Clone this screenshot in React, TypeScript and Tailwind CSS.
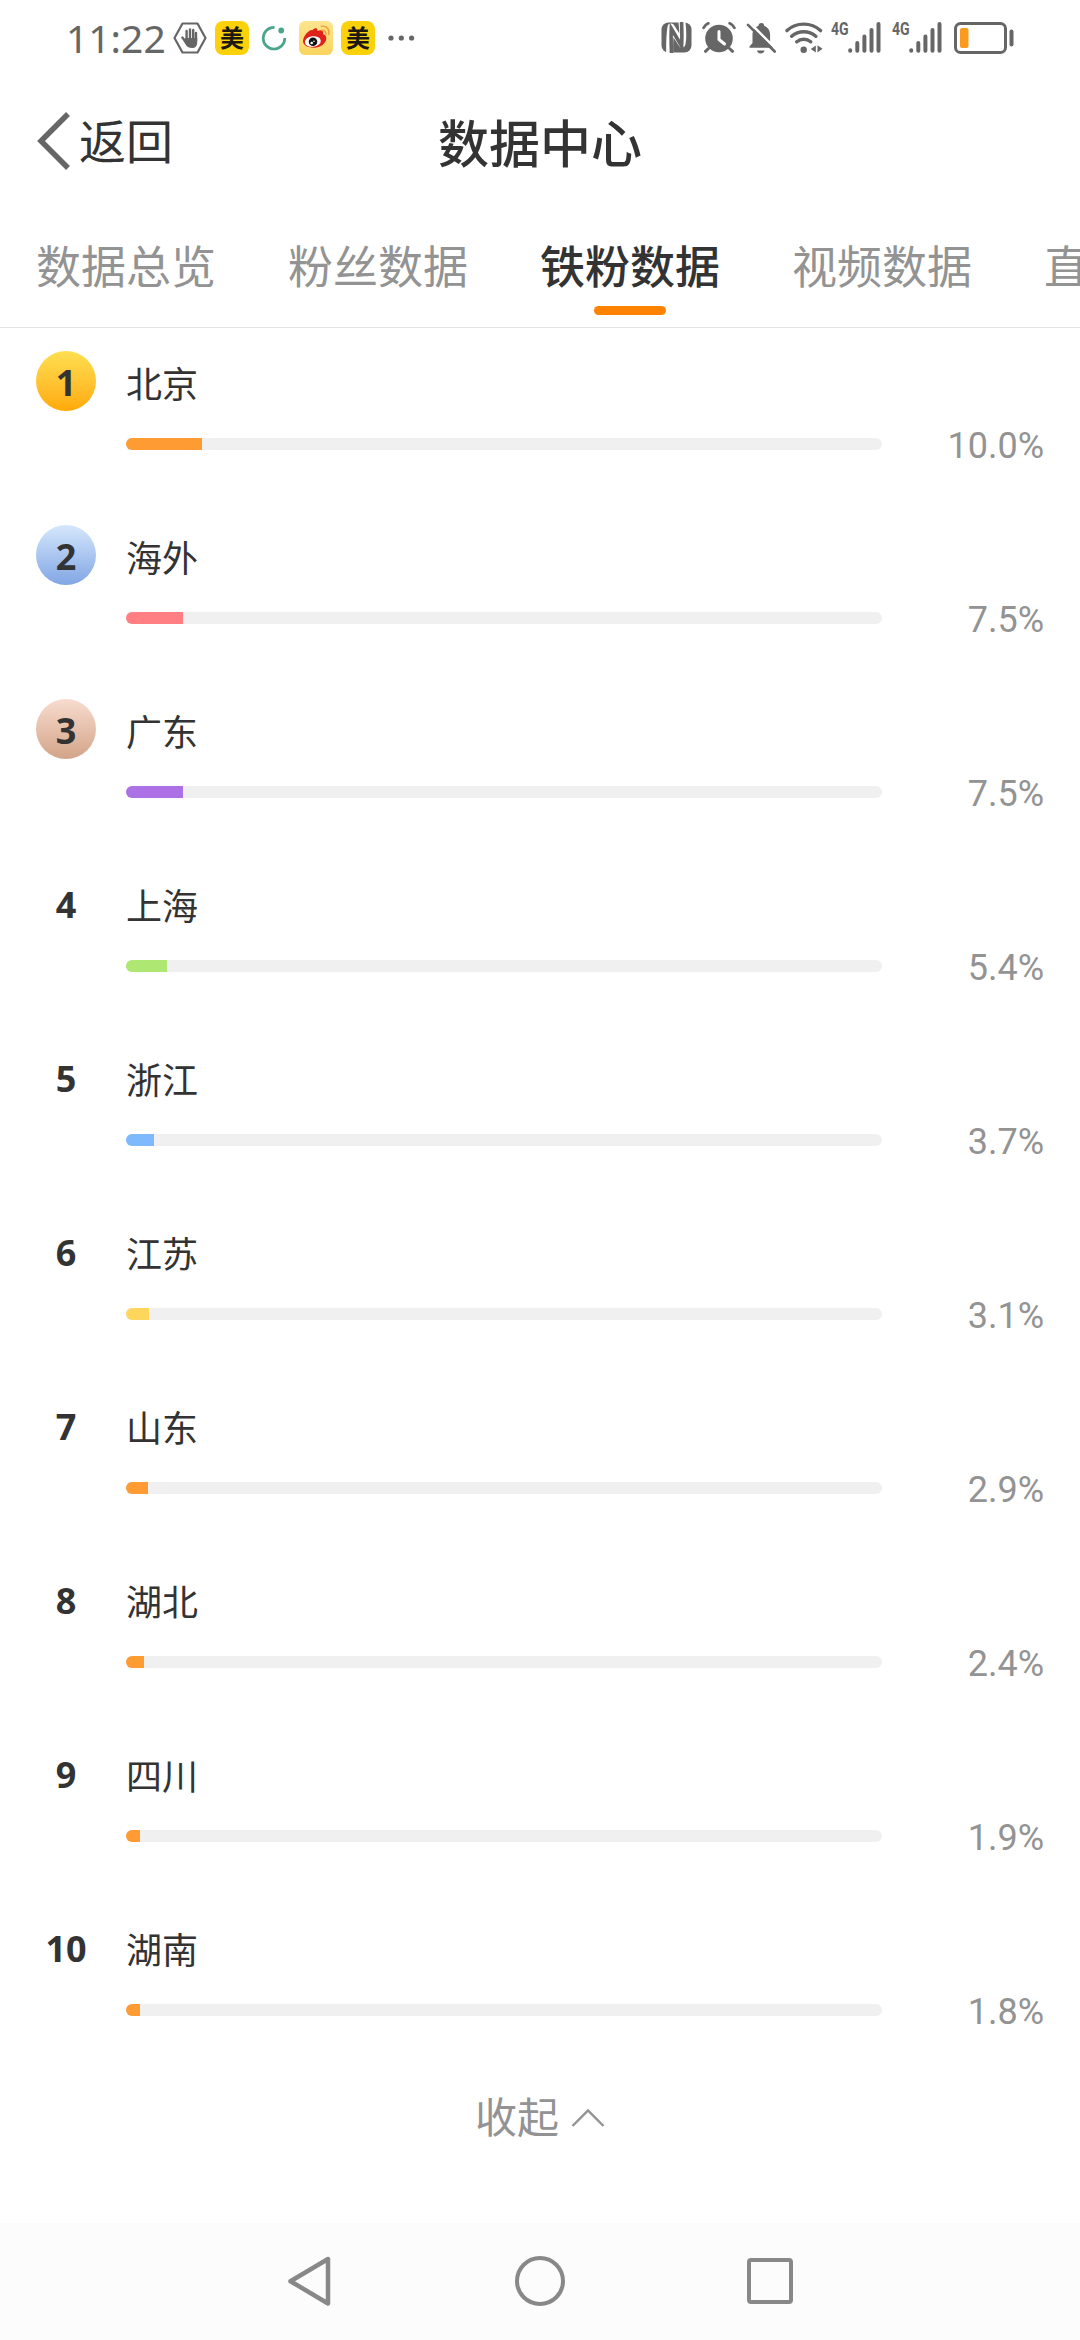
import clsx from 'clsx'

const TABS = ['数据总览', '粉丝数据', '铁粉数据', '视频数据', '直']
const ACTIVE_TAB = '铁粉数据'

const REGIONS = [
  { name: '北京', percent: 10.0, bar: 'bg-[#ff9b33]', badge: 'bg-linear-to-b from-[#ffdf4f] to-[#ffaa00]' },
  { name: '海外', percent: 7.5, bar: 'bg-[#ff7f82]', badge: 'bg-linear-to-b from-[#d6e7fc] to-[#81a6e4]' },
  { name: '广东', percent: 7.5, bar: 'bg-[#ac71e4]', badge: 'bg-linear-to-b from-[#f8dccf] to-[#d3a488]' },
  { name: '上海', percent: 5.4, bar: 'bg-[#aee872]' },
  { name: '浙江', percent: 3.7, bar: 'bg-[#7fb9fd]' },
  { name: '江苏', percent: 3.1, bar: 'bg-[#ffd65c]' },
  { name: '山东', percent: 2.9, bar: 'bg-[#ff9b33]' },
  { name: '湖北', percent: 2.4, bar: 'bg-[#ff9b33]' },
  { name: '四川', percent: 1.9, bar: 'bg-[#ff9b33]' },
  { name: '湖南', percent: 1.8, bar: 'bg-[#ff9b33]' },
]

function MeituanIcon() {
  return (
    <span className="flex size-[34px] items-center justify-center rounded-[8px] bg-[#fad10a] pb-[2px] text-[24px] leading-none font-bold text-[#1c1a10]">
      美
    </span>
  )
}

function HandIcon() {
  return (
    <svg width="34" height="32" viewBox="0 0 34 32" fill="none">
      <path d="M9.5 1.5h15l8 14.5-8 14.5h-15L1.5 16z" stroke="#666" strokeWidth="2.2" strokeLinejoin="round" />
      <path
        d="M13.6 9v9M17 7.4v10M20.2 8v10M23 11v8M9.3 15.6l4 5"
        stroke="#666"
        strokeWidth="2.4"
        strokeLinecap="round"
      />
      <path d="M12.4 16h11.8v4.500c0 3.500-1.800 5.500-5.200 5.500-3 0-4.700-1-5.900-2.800L10.500 19z" fill="#666" />
    </svg>
  )
}

function RingIcon() {
  return (
    <svg width="26" height="26" viewBox="0 0 26 26" fill="none">
      <path d="M13.500 2.400A10.800 10.800 0 1 0 23.800 13" stroke="#4aa58c" strokeWidth="2.700" />
      <circle cx="20.200" cy="5.500" r="2.900" fill="#4aa58c" />
    </svg>
  )
}

function WeiboIcon() {
  return (
    <svg width="34" height="34" viewBox="0 0 34 34" fill="none">
      <defs>
        <linearGradient id="weibo-bg" x1="0" y1="0" x2="0" y2="1">
          <stop offset="0" stopColor="#fde590" />
          <stop offset="1" stopColor="#f9d45f" />
        </linearGradient>
      </defs>
      <rect width="34" height="34" rx="6" fill="url(#weibo-bg)" />
      <path
        d="M13.500 9.200c1.600-1.800 3.300-2.400 4.400-1.500.6.500.7 1.300.4 2.400 2.400-1 5-1.100 5.700.3.400.8.300 1.700-.1 2.700 2.300.8 3.600 2.300 3.400 4.700-.4 4.600-5.600 9-12.200 9C8.800 26.800 4 24.300 4 20.100c0-3.100 2.200-7 5.200-9.400 1.200-1 3-2.300 4.300-1.500z"
        fill="#e0201b"
      />
      <ellipse cx="13.800" cy="20.500" rx="8" ry="5.300" transform="rotate(-7 13.800 20.500)" fill="#fff" />
      <circle cx="14" cy="20.800" r="4.300" fill="#111" />
      <circle cx="12.700" cy="22" r="1.300" fill="#fff" />
      <circle cx="15" cy="20.300" r=".8" fill="#fff" />
      <path d="M23 9.400c2.600-.4 4.300 1.500 3.800 4" stroke="#f0a53c" strokeWidth="1.600" strokeLinecap="round" />
      <path d="M22.500 5.400c5-1 8.600 3.200 7.300 8" stroke="#f0a53c" strokeWidth="1.600" strokeLinecap="round" />
    </svg>
  )
}

function MoreIcon() {
  return (
    <svg width="28" height="8" viewBox="0 0 28 8" fill="#666">
      <circle cx="4" cy="4" r="2.600" />
      <circle cx="14.300" cy="4" r="2.600" />
      <circle cx="24.600" cy="4" r="2.600" />
    </svg>
  )
}

function NfcIcon() {
  return (
    <svg width="31" height="31" viewBox="0 0 31 31" fill="none">
      <rect x=".5" y=".5" width="30" height="30" rx="7" fill="#666" />
      <path d="M8.800 34Q8.200 16 10 5L21 22Q22.800 14 20.600-3" stroke="#fff" strokeWidth="7" strokeLinejoin="round" />
      <path d="M10.600 34Q9.800 16 10.300 6.500L20.600 24Q21.200 14 20.400-3" stroke="#666" strokeWidth="3.600" />
    </svg>
  )
}

function AlarmIcon() {
  return (
    <svg width="34" height="31" viewBox="0 0 34 31" fill="none">
      <circle cx="17" cy="16.500" r="13.800" fill="#666" />
      <path d="M1.600 5.800C2.700 3.800 4.200 2.300 6.300 1.300M32.400 5.800c-1.100-2-2.600-3.500-4.700-4.500" stroke="#666" strokeWidth="2.800" strokeLinecap="round" />
      <path d="M6.500 26.500l-3 2.800M27.500 26.500l3 2.800" stroke="#666" strokeWidth="3" strokeLinecap="round" />
      <path d="M17 9.500v8l5.500 4.500" stroke="#fff" strokeWidth="3" strokeLinecap="round" strokeLinejoin="round" />
    </svg>
  )
}

function MutedBellIcon() {
  return (
    <svg width="31" height="32" viewBox="0 0 31 32" fill="none">
      <path d="M3.500 25.800v-1.300l3-3.500v-8c0-4.300 2.200-7.700 5.800-9C12.600 2 13.600 1 15.300 1s2.700 1 3 3c3.600 1.300 5.800 4.700 5.800 9v8l3.200 3.500v1.300z" fill="#666" />
      <path d="M11 28.500h7.500c-.4 1.800-1.600 3-3.700 3s-3.400-1.200-3.800-3z" fill="#666" />
      <path d="M3.500 .5l29 29" stroke="#fff" strokeWidth="2.600" />
      <path d="M2 2.800l26.700 26.700" stroke="#666" strokeWidth="2.600" strokeLinecap="round" />
    </svg>
  )
}

function WifiIcon() {
  return (
    <svg width="38" height="32" viewBox="0 0 38 32" fill="none">
      <path
        d="M2 8.600c9.200-8.600 24.300-8.600 33.500 0M6.700 14.300c6.800-6 17.300-6 24.100 0M11.800 19.800c3.900-3.400 10-3.400 13.900 0"
        stroke="#666"
        strokeWidth="3.400"
        strokeLinecap="round"
      />
      <circle cx="18.700" cy="27.700" r="3.200" fill="#666" />
      <path d="M25.800 27l5-3.400v7zM37.500 26.800l-5-3.600v7.200z" fill="#666" />
    </svg>
  )
}

function SignalIcon() {
  return (
    <div className="flex h-[31px] w-[50px]">
      <span className="w-[17px] origin-left scale-x-[0.74] font-[Roboto] text-[19px] leading-[14px] font-bold">4G</span>
      <svg width="33" height="31" viewBox="0 0 33 31" stroke="#666" strokeWidth="4" strokeLinecap="round">
        <path d="M2.200 28.200v.5M9.300 21v7.700M16.400 14.500v14.200M23.500 8v20.700M30.500 2v26.700" />
      </svg>
    </div>
  )
}

function BatteryIcon() {
  return (
    <svg width="60" height="32" viewBox="0 0 60 32" fill="none">
      <rect x="1.500" y="1.500" width="50" height="29" rx="5" stroke="#666" strokeWidth="3" />
      <rect x="6" y="6" width="8.500" height="20" rx="2" fill="#fa9a1e" />
      <rect x="55.500" y="7.500" width="4" height="17" rx="2" fill="#666" />
    </svg>
  )
}

function StatusBar() {
  return (
    <div className="flex h-[76px] items-center justify-between pr-[66px] pl-[66px] text-[#666]">
      <div className="flex items-center">
        <span className="mb-[2px] w-[99px] font-['Noto_Sans'] text-[39px] leading-none whitespace-nowrap">11:22</span>
        <div className="ml-[8px] flex items-center gap-[8px]">
          <HandIcon />
          <MeituanIcon />
          <div className="flex w-[34px] justify-center">
            <RingIcon />
          </div>
          <WeiboIcon />
          <MeituanIcon />
        </div>
        <div className="ml-[12px]">
          <MoreIcon />
        </div>
      </div>
      <div className="mb-[1px] flex items-center">
        <NfcIcon />
        <div className="ml-[10px]"><AlarmIcon /></div>
        <div className="ml-[10px]"><MutedBellIcon /></div>
        <div className="ml-[8px]"><WifiIcon /></div>
        <div className="ml-[8px]"><SignalIcon /></div>
        <div className="ml-[11px]"><SignalIcon /></div>
        <div className="ml-[12px]"><BatteryIcon /></div>
      </div>
    </div>
  )
}

function Header() {
  return (
    <header className="grid h-[132px] grid-cols-3 items-center px-[36px] text-[#333]">
      <button className="mb-[2px] flex items-center">
        <svg width="36" height="58" viewBox="0 0 36 58" fill="none">
          <path d="M32 2L5 29l27 27" stroke="#666" strokeWidth="5.500" />
        </svg>
        <span className="mb-[5px] ml-[7px] text-[47px] leading-[58px]">返回</span>
      </button>
      <h1 className="mb-[2px] text-center text-[51px] leading-[58px] font-medium">数据中心</h1>
    </header>
  )
}

function TabBar() {
  return (
    <nav className="flex h-[120px] gap-[72px] overflow-hidden border-b border-[#e3e3e3] pl-[36px]">
      {TABS.map((tab) => (
        <div key={tab} className="flex w-[180px] shrink-0 flex-col items-start pt-[32px]">
          <span
            className={clsx(
              'text-[45px] leading-[50px] whitespace-nowrap',
              tab === ACTIVE_TAB ? 'font-medium text-[#333]' : 'text-[#939393]'
            )}
          >
            {tab}
          </span>
          {tab === ACTIVE_TAB && <span className="mt-[16px] h-[9px] w-[72px] self-center rounded-full bg-[#ff8200]" />}
        </div>
      ))}
    </nav>
  )
}

function RegionRow({ rank, region }: { rank: number; region: (typeof REGIONS)[number] }) {
  return (
    <li className="flex h-[174px] px-[36px]">
      <div
        className={clsx(
          "flex size-[60px] items-center justify-center rounded-full pt-[3px] font-['Noto_Sans'] text-[36px] leading-none font-bold text-[#333]",
          region.badge
        )}
      >
        {rank}
      </div>
      <div className="ml-[30px] flex-1">
        <div className="flex h-[61px] items-center text-[36px] leading-none text-[#333]">{region.name}</div>
        <div className="mt-[14px] flex h-[36px] items-center">
          <div className="h-[12px] w-[756px] overflow-hidden rounded-full bg-[#f0f0f0]">
            <div className={clsx('h-full', region.bar)} style={{ width: `${region.percent}%` }} />
          </div>
          <span className="mt-[3px] flex-1 text-right font-[Roboto] text-[36px] leading-none text-[#939393]">
            {region.percent.toFixed(1)}%
          </span>
        </div>
      </div>
    </li>
  )
}

function NavigationBar() {
  return (
    <footer className="flex h-[117px] items-center bg-[#fcfcfc] px-[193px] pb-[2px]">
      <div className="flex w-[231px] justify-center">
        <svg width="46" height="54" viewBox="0 0 46 54" fill="none">
          <path d="M42 5v44.500L4.500 27.200z" stroke="#888" strokeWidth="4.500" strokeLinejoin="round" />
        </svg>
      </div>
      <div className="flex w-[232px] justify-center">
        <span className="size-[50px] rounded-full border-[4px] border-[#888]" />
      </div>
      <div className="flex w-[227px] justify-center">
        <span className="size-[46px] rounded-[4px] border-[4px] border-[#888]" />
      </div>
    </footer>
  )
}

export default function App() {
  return (
    <div className="flex h-[2340px] w-[1080px] flex-col overflow-hidden bg-white font-['Noto_Sans_CJK_SC',sans-serif]">
      <StatusBar />
      <Header />
      <TabBar />
      <ul className="pt-[23px]">
        {REGIONS.map((region, i) => (
          <RegionRow key={region.name} rank={i + 1} region={region} />
        ))}
      </ul>
      <button className="flex flex-1 items-start justify-center gap-[12px] text-[#939393]">
        <span className="-mt-[1px] text-[42px] leading-[50px]">收起</span>
        <svg className="mt-[17px]" width="34" height="20" viewBox="0 0 34 20" fill="none">
          <path d="M1.500 18L17 2.500 32.500 18" stroke="#939393" strokeWidth="2.400" />
        </svg>
      </button>
      <NavigationBar />
    </div>
  )
}
